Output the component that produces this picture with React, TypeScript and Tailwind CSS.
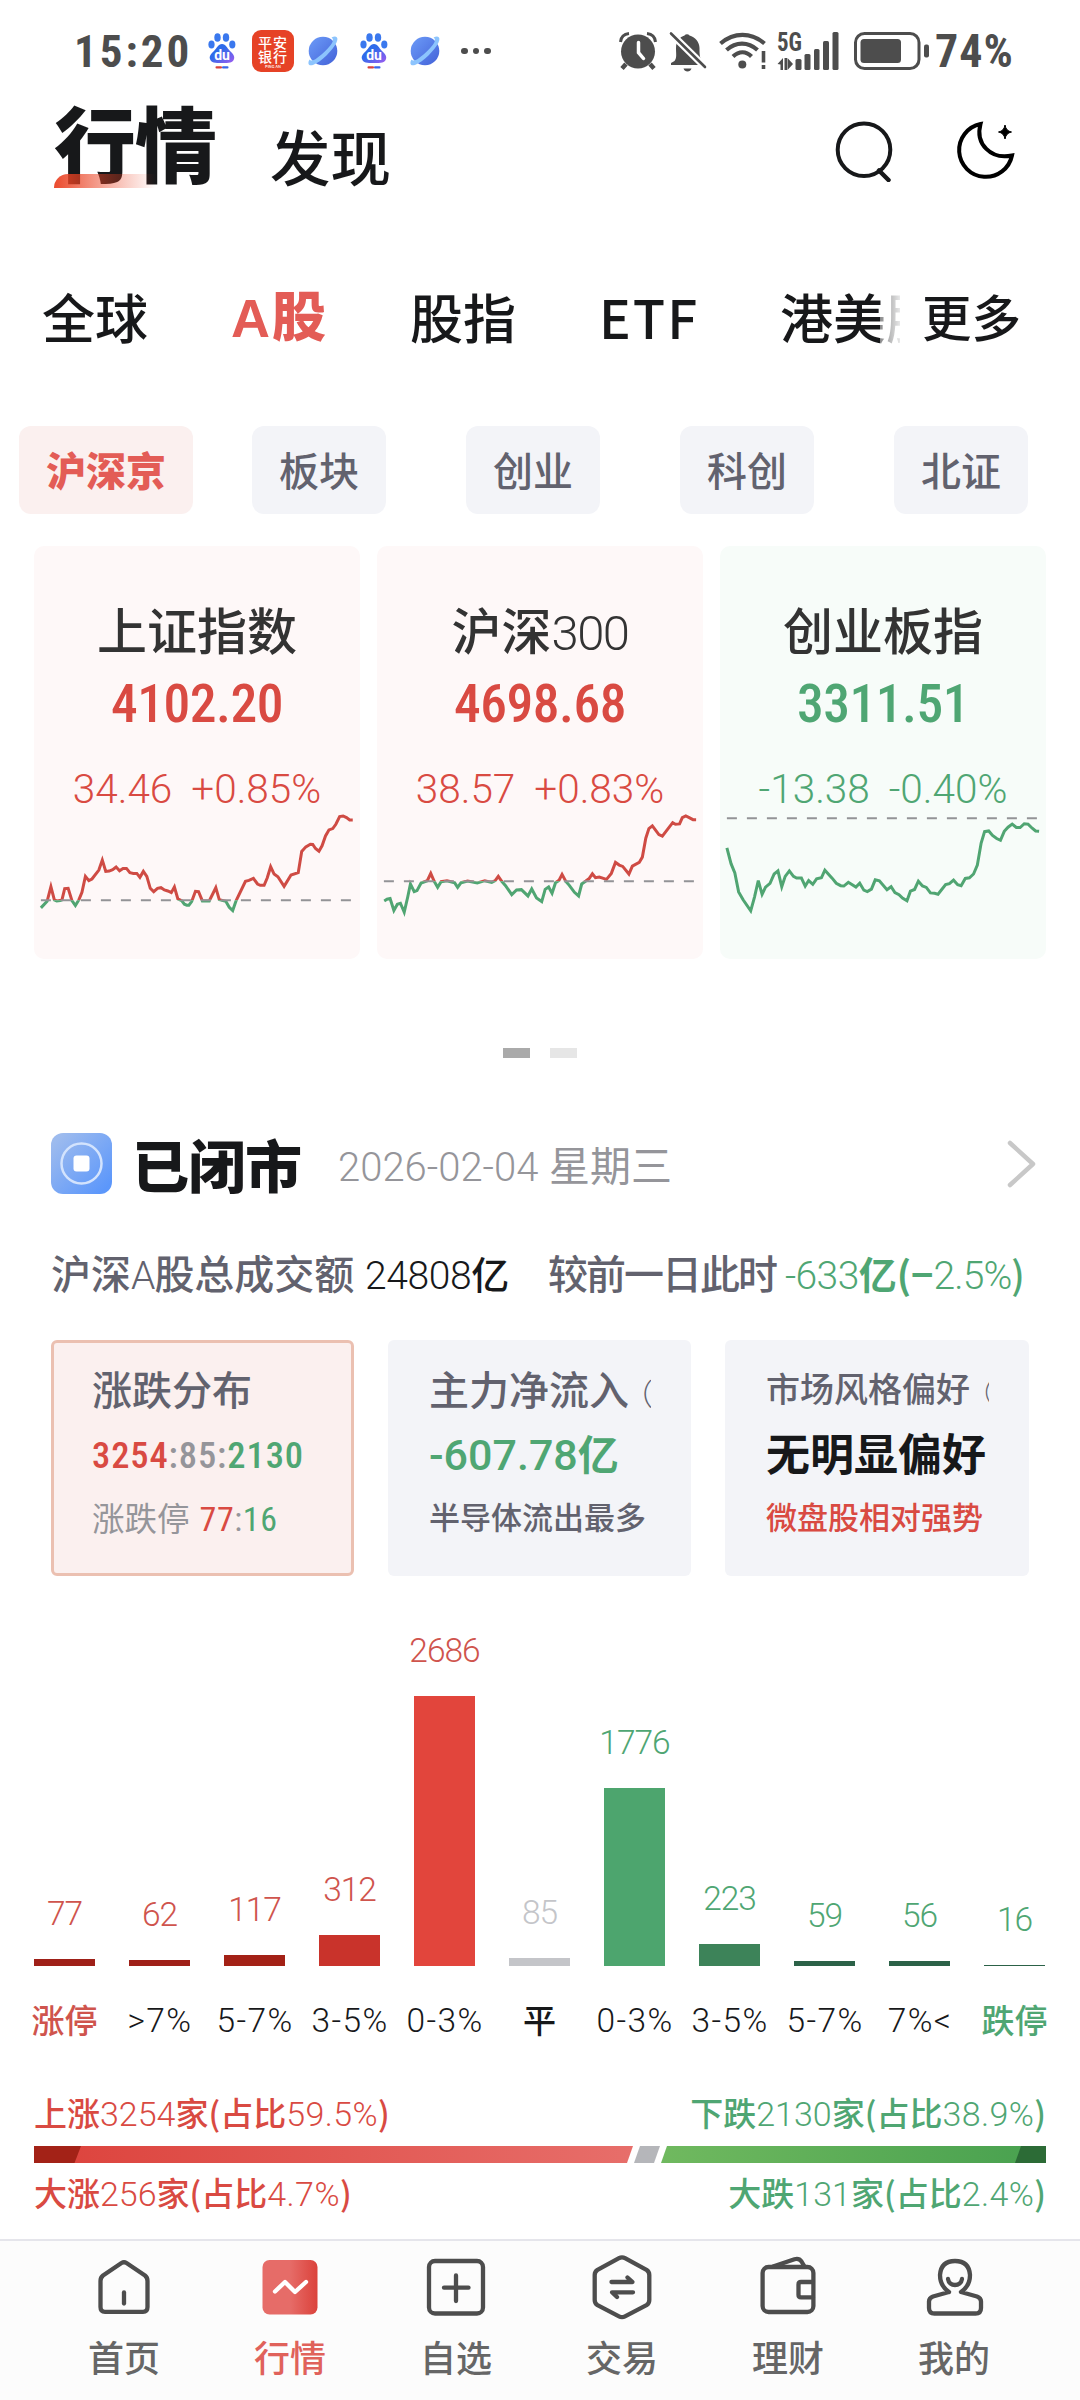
import { ReactNode, useId } from "react";
import { clsx } from "clsx";

const Num = ({ children, className }: { children: ReactNode; className?: string }) => (
  <span className={clsx("[font-family:'Roboto_Condensed',Roboto,sans-serif]", className)}>
    {children}
  </span>
);

const WideNum = ({ children, className }: { children: ReactNode; className?: string }) => (
  <span className={clsx("[font-family:Roboto,sans-serif]", className)}>{children}</span>
);

const BaiduIcon = () => (
  <svg width="28" height="36" viewBox="0 0 28 36">
    <defs>
      <linearGradient id="paw" x1="0" y1="0" x2="1" y2="1">
        <stop offset="0.4" stopColor="#2f6bea" />
        <stop offset="1" stopColor="#a05bf0" />
      </linearGradient>
    </defs>
    <ellipse cx="9.5" cy="4.5" rx="3.2" ry="4.3" fill="#3a78ee" />
    <ellipse cx="18" cy="4.5" rx="3.2" ry="4.3" fill="#3a78ee" />
    <ellipse cx="3.5" cy="11.5" rx="3.1" ry="4.1" fill="#3a78ee" />
    <ellipse cx="24.3" cy="11.5" rx="3.1" ry="4.1" fill="#3a78ee" />
    <path d="M14 11c4 0 5 4 8 7s5 5 4 8c-1 4-5 4-12 4S3 30 2 26c-1-3 1-5 4-8s4-7 8-7z" fill="url(#paw)" />
    <text x="14" y="26.5" textAnchor="middle" fontSize="14" fontWeight="700" fill="#fff" fontFamily="Roboto, sans-serif">
      du
    </text>
    <rect x="7.5" y="33.2" width="6.5" height="2.3" rx="1" fill="#d9413d" />
    <rect x="14" y="33.2" width="6.5" height="2.3" rx="1" fill="#3a66e8" />
  </svg>
);

const PlanetIcon = () => (
  <svg width="30" height="30" viewBox="0 0 30 30">
    <defs>
      <linearGradient id="planet" x1="0" y1="0" x2="1" y2="1">
        <stop offset="0" stopColor="#6d9cf8" />
        <stop offset="1" stopColor="#4261d8" />
      </linearGradient>
    </defs>
    <circle cx="15" cy="15" r="14.3" fill="url(#planet)" />
    <path
      d="M23.5 1.5C28 -1 31 1 28.5 6.5C25 14 13 26 5.5 28.7C1 30.5 -1 28 1.5 23.5C2.5 25 5 25 9 22C15 18 21.5 11 24 7C25.5 4.5 25 2.5 23.5 1.5Z"
      fill="#8cc4fd"
    />
  </svg>
);

const StatusBar = () => (
  <div className="flex h-[102px] items-center pl-[74px] pr-[62px] text-[#4d4d4d]">
    <Num className="w-[134px] text-[45px] font-bold leading-none tracking-[3px]">15:20</Num>
    <BaiduIcon />
    <div className="ml-4 flex h-[42px] w-[42px] flex-col items-center rounded-[9px] bg-[#e64226] pt-[5px] font-medium text-white [font-family:'Noto_Sans_CJK_SC',sans-serif]">
      <span className="text-[14px] leading-[14px] tracking-[1px]">平安</span>
      <span className="text-[14px] leading-[14px] tracking-[1px]">银行</span>
      <span className="text-[4px] leading-[6px]">PING AN</span>
    </div>
    <div className="ml-[14px] flex items-center gap-[22px]">
      <PlanetIcon />
      <BaiduIcon />
      <PlanetIcon />
    </div>
    <div className="ml-[21px] flex gap-[5px]">
      <span className="size-[6.5px] rounded-full bg-[#4d4d4d]" />
      <span className="size-[6.5px] rounded-full bg-[#4d4d4d]" />
      <span className="size-[6.5px] rounded-full bg-[#4d4d4d]" />
    </div>

    <div className="ml-auto flex items-center">
      <svg width="38" height="40" viewBox="0 0 38 40" fill="none" stroke="#4d4d4d">
        <circle cx="19" cy="20.5" r="17" fill="#4d4d4d" stroke="none" />
        <path d="M1.5 11C2 6 5 3 10 2.5M36.5 11C36 6 33 3 28 2.5" strokeWidth="3" />
        <path d="M7 33l-4 4.5M31 33l4 4.5" strokeWidth="4.5" />
        <path d="M19.5 11.5v10l5 6" stroke="#fff" strokeWidth="3.5" strokeLinecap="round" />
      </svg>
      <svg className="ml-3" width="38" height="42" viewBox="0 0 38 42" fill="#4d4d4d">
        <path d="M5.5 31C8 28 7 24 7 18C7 11 11 7 15.5 5.5a3 3 0 0 1 5 0C26 7 30.5 12 30.5 18c0 6 0 10 3 14v3H2v-2z" />
        <path d="M14.5 38.5h8c-1 4-7 4-8 0z" />
        <path d="M0 1.5L37 38" stroke="#fff" strokeWidth="7" />
        <path d="M2 3.5L36 37" stroke="#4d4d4d" strokeWidth="2.6" strokeLinecap="round" />
      </svg>
      <svg className="ml-3" width="48" height="40" viewBox="0 0 48 40" fill="none" stroke="#4d4d4d" strokeWidth="4.2">
        <path d="M1.5 12.5C15 1 32 1 45.5 12.5" />
        <path d="M7.5 19C17 10.5 29 10.5 38.5 19" />
        <path d="M14 25.5C20 20 27 20 32.5 25.5" />
        <circle cx="23.3" cy="33.5" r="4" fill="#4d4d4d" stroke="none" />
        <path d="M44.5 20v11.5M44.5 34v4" strokeWidth="3.6" />
      </svg>
      <svg className="ml-[10px] overflow-visible" width="62" height="38" viewBox="0 0 62 38" fill="#4d4d4d">
        <text x="0" y="19" fontSize="26" fontWeight="700" textLength="25" lengthAdjust="spacingAndGlyphs" fontFamily="Roboto Condensed, sans-serif">
          5G
        </text>
        <path d="M0.5 32L6 26V38H3.5V32.5zM7.5 26H10V38H7.5zM10.5 38V26L16 32z" />
        <rect x="18.5" y="27" width="6" height="11" rx="1.5" />
        <rect x="27.5" y="22" width="6" height="16" rx="1.5" />
        <rect x="37" y="17" width="5.5" height="21" rx="1.5" />
        <rect x="46" y="9" width="6" height="29" rx="1.5" />
        <rect x="55.5" y="0" width="6" height="38" rx="1.5" />
      </svg>
      <svg className="ml-[15px]" width="76" height="38" viewBox="0 0 76 38" fill="#4d4d4d">
        <rect x="1.5" y="1.5" width="63.5" height="35" rx="9" fill="none" stroke="#4d4d4d" strokeWidth="3" />
        <rect x="6.5" y="7" width="40.5" height="24" rx="3.5" />
        <rect x="70" y="12.5" width="5" height="13" rx="2" />
      </svg>
      <Num className="ml-[5px] w-[83px] text-[46px] font-bold leading-none tracking-[1px]">74%</Num>
    </div>
  </div>
);

const Header = () => (
  <header className="flex h-[152px] items-start pl-[54px] pr-[62px] text-[#17181a]">
    <div className="relative h-[86px] w-[162px]">
      <h1 className="mt-[-4px] text-[82px] font-black leading-[86px] tracking-[-1px]">行情</h1>
      <div className="absolute bottom-0 left-0 h-[14px] w-[102px] rounded-tl-[14px] bg-linear-to-r from-[#ea4122]/95 via-[#ea4122]/45 to-[#ea4122]/0" />
    </div>
    <span className="ml-[54px] pt-[23px] text-[60.5px] font-medium leading-[60px]">发现</span>
    <svg className="ml-auto mt-[16px]" width="60" height="64" viewBox="0 0 60 64" fill="none" stroke="#17181a" strokeWidth="4">
      <circle cx="30" cy="31.7" r="26.3" />
      <path d="M45 52.5L54.5 62" strokeWidth="4.5" strokeLinecap="round" />
    </svg>
    <svg className="ml-[60px] mt-[16px]" width="64" height="64" viewBox="0 0 64 64" fill="none" stroke="#000" strokeWidth="4">
      <path d="M26.5 6A26.7 26.7 0 1 0 58 37.5C37 42 21 26 26.5 6Z" />
      <path d="M51 7q1 6 6.5 7q-5.5 1 -6.5 7q-1 -6 -6.5 -7q5.5 -1 6.5 -7z" fill="#000" strokeWidth="1" />
    </svg>
  </header>
);

const Tabs = () => (
  <nav className="flex h-32 items-center pb-[4px] pl-[42px] text-[53px] font-medium leading-none text-[#17181a]">
    <span className="w-[189px]">全球</span>
    <span className="w-[179px] text-[54px] font-black text-[#e35c56]">
      <span className="tracking-[2px] [font-family:'Liberation_Sans',sans-serif]">A</span>股
    </span>
    <span className="w-[189px]">股指</span>
    <span className="w-[181px] tracking-[2px]">ETF</span>
    <div className="relative w-[120px] overflow-hidden whitespace-nowrap py-3">
      港美股
      <div className="absolute inset-y-0 right-0 w-[20px] bg-linear-to-r from-white/50 to-white/90" />
    </div>
    <span className="ml-[22px] text-[49.5px]">更多</span>
  </nav>
);

const chips = ["板块", "创业", "科创", "北证"];

const Chips = () => (
  <div className="mt-11 flex text-[40px] font-medium leading-none">
    <div className="ml-[19px] flex h-[88px] w-[174px] items-center justify-center rounded-[12px] bg-[#fbf0ef] pb-[3px] font-black text-[#e35c56]">
      沪深京
    </div>
    <div className="ml-[59px] flex gap-20">
      {chips.map((c) => (
        <div key={c} className="flex h-[88px] w-[134px] items-center justify-center rounded-[12px] bg-[#f3f4f8] pb-[3px] text-[#62626e]">
          {c}
        </div>
      ))}
    </div>
  </div>
);

type IndexData = {
  name: string;
  digits?: string;
  value: string;
  change: string;
  percent: string;
  up: boolean;
  viewBox: [number, number, number, number];
  base: number;
  points: string;
};

const indexes: IndexData[] = [
  {
    name: "上证指数",
    value: "4102.20",
    change: "34.46",
    percent: "+0.85%",
    up: true,
    viewBox: [42, 840, 945, 446],
    base: 1109,
    points:
      "62,1132 80,1112 91,1068 101,1108 108,1111 118,1110 123,1108 131,1074 141,1073 152,1110 162,1125 172,1108 181,1085 191,1037 201,1050 210,1045 230,1018 240,988 250,1022 260,1021 270,1017 280,1009 290,1020 300,1013 310,1013 320,1026 330,1028 340,1028 349,1040 359,1022 369,1037 379,1073 389,1083 400,1073 410,1071 420,1078 430,1081 440,1086 449,1069 459,1105 470,1110 478,1121 485,1124 491,1124 499,1113 510,1082 519,1083 530,1111 550,1111 560,1090 569,1071 579,1107 598,1112 608,1130 618,1140 628,1110 655,1052 665,1049 678,1043 690,1060 698,1064 709,1064 718,1042 728,1008 738,1030 749,1038 767,1067 787,1033 808,1026 818,962 830,948 843,940 850,941 858,953 868,961 877,945 887,915 897,897 908,893 917,880 928,857 938,855 948,860 957,867 966,867",
  },
  {
    name: "沪深",
    digits: "300",
    value: "4698.68",
    change: "38.57",
    percent: "+0.83%",
    up: true,
    viewBox: [1037, 840, 946, 446],
    base: 1052,
    points:
      "1058,1111 1066,1106 1075,1104 1086,1140 1096,1121 1105,1118 1116,1145 1126,1100 1134,1060 1145,1083 1153,1080 1165,1057 1183,1050 1193,1028 1203,1052 1213,1070 1223,1053 1240,1050 1262,1056 1271,1070 1281,1056 1300,1051 1328,1057 1350,1050 1370,1055 1380,1050 1389,1037 1399,1052 1410,1065 1428,1092 1442,1078 1456,1077 1475,1096 1486,1075 1500,1102 1515,1113 1525,1076 1535,1069 1545,1088 1555,1056 1565,1049 1574,1031 1585,1052 1595,1064 1610,1085 1622,1096 1631,1060 1643,1051 1653,1043 1662,1029 1671,1041 1682,1039 1703,1046 1717,1028 1729,995 1740,1003 1750,1007 1768,1030 1778,1006 1798,995 1807,979 1817,922 1826,893 1836,885 1855,911 1865,916 1895,875 1903,880 1915,879 1923,860 1933,855 1943,860 1954,866 1963,866",
  },
  {
    name: "创业板指",
    value: "3311.51",
    change: "-13.38",
    percent: "-0.40%",
    up: false,
    viewBox: [523, 815, 945, 430],
    base: 836,
    points:
      "543,922 555,968 566,995 577,1050 590,1073 612,1105 623,1065 634,1017 645,1057 655,1036 668,1025 680,998 691,989 702,1035 712,1005 724,989 736,1005 745,1010 759,1010 770,1033 780,1017 792,1028 803,1012 817,1009 827,987 848,1010 860,1025 873,1032 882,1033 895,1022 917,1036 928,1025 940,1045 950,1049 962,1042 973,1015 985,1018 1007,1044 1019,1035 1030,1052 1042,1058 1052,1068 1065,1076 1075,1048 1087,1043 1098,1019 1110,1033 1121,1037 1133,1053 1145,1054 1155,1057 1177,1029 1188,1026 1200,1016 1212,1029 1222,1032 1234,1011 1246,1009 1258,998 1269,972 1280,908 1290,875 1302,873 1313,886 1325,895 1336,900 1347,874 1358,862 1370,853 1382,863 1393,863 1405,852 1416,853 1428,865 1438,873 1448,874",
  },
];

// intraday line, red above yesterday's close and green below it
const Sparkline = ({ viewBox, base, points }: Pick<IndexData, "viewBox" | "base" | "points">) => {
  const id = useId();
  const [x, y, w, h] = viewBox;
  return (
    <svg className="h-[148px] w-full" viewBox={viewBox.join(" ")} preserveAspectRatio="none" fill="none">
      <defs>
        <clipPath id={`${id}up`}>
          <rect x={x} y={y} width={w} height={base - y} />
        </clipPath>
        <clipPath id={`${id}down`}>
          <rect x={x} y={base} width={w} height={y + h - base} />
        </clipPath>
      </defs>
      <polyline points={points} clipPath={`url(#${id}up)`} stroke="#cf4b44" strokeWidth="3" vectorEffect="non-scaling-stroke" />
      <polyline points={points} clipPath={`url(#${id}down)`} stroke="#50a572" strokeWidth="3" vectorEffect="non-scaling-stroke" />
      <line x1={x + 20} x2={x + w - 20} y1={base} y2={base} stroke="#939396" strokeWidth="2" strokeDasharray="10 10" vectorEffect="non-scaling-stroke" />
    </svg>
  );
};

const IndexCards = () => (
  <section className="mt-8 flex gap-[17px] pl-[34px]">
    {indexes.map((item) => (
      <div
        key={item.value}
        className={clsx(
          "flex h-[413px] w-[326px] flex-col items-center rounded-[10px]",
          item.up ? "bg-[#fef8f8] text-[#d94a42]" : "bg-[#f7fcf9] text-[#4fa673]",
        )}
      >
        <div className="mt-[52px] h-[60px] text-[50px] font-medium leading-[60px] text-[#333]">
          {item.name}
          {item.digits && <WideNum className="text-[49px] font-light tracking-[-1.5px]">{item.digits}</WideNum>}
        </div>
        <Num className="mt-[16px] text-[53.5px] font-medium leading-[60px] tracking-[-0.5px]">{item.value}</Num>
        <div className="mt-[33px] flex gap-[19px] text-[40.5px] font-light leading-[44px]">
          <WideNum>{item.change}</WideNum>
          <WideNum>{item.percent}</WideNum>
        </div>
        <div className="mt-auto w-full">
          <Sparkline viewBox={item.viewBox} base={item.base} points={item.points} />
        </div>
      </div>
    ))}
  </section>
);

const MarketStatus = () => (
  <section className="mt-[75px] pl-[51px]">
    <div className="flex h-[61px] items-center">
      <svg width="61" height="61" viewBox="0 0 61 61">
        <defs>
          <linearGradient id="market" x1="0" y1="0" x2="1" y2="1">
            <stop offset="0.1" stopColor="#9dbbee" />
            <stop offset="0.9" stopColor="#5c97fb" />
          </linearGradient>
        </defs>
        <rect width="61" height="61" rx="12" fill="url(#market)" />
        <circle cx="30.5" cy="30.5" r="20" fill="none" stroke="#d3e3fd" strokeWidth="2.5" />
        <rect x="22.5" y="22.5" width="16" height="16" rx="3" fill="#fff" />
      </svg>
      <h2 className="ml-[20px] w-[206px] pb-[2px] text-[57px] font-black leading-[60px] tracking-[-0.5px] text-[#17181a]">已闭市</h2>
      <div className="flex h-[62px] items-baseline text-[#95959a]">
        <WideNum className="w-[211px] text-[40px] font-light leading-[60px]">2026-02-04</WideNum>
        <span className="text-[41px] leading-[60px]">星期三</span>
      </div>
      <svg className="ml-auto mr-[43px]" width="30" height="50" viewBox="0 0 30 50" fill="none" stroke="#c8c8c8" strokeWidth="4.5" strokeLinecap="round" strokeLinejoin="round">
        <path d="M3 4L26 25L3 46" />
      </svg>
    </div>
    <div className="mt-[48px] flex h-[62px] items-baseline whitespace-nowrap text-[40px] font-medium leading-[60px] text-[#62626e]">
      <span className="w-[314px]">
        沪深<WideNum className="text-[39px] font-light tracking-[-1px]">A</WideNum>股总成交额
      </span>
      <span className="w-[183px] text-[#17181a]">
        <WideNum className="text-[39px] font-light tracking-[-0.4px]">24808</WideNum>
        <span className="text-[38px] font-medium">亿</span>
      </span>
      <span className="w-[237px] tracking-[-2px]">较前一日此时</span>
      <span className="text-[#4fa673]">
        <WideNum className="text-[39px] font-light tracking-[-0.6px]">-633</WideNum>
        <span className="text-[38px] font-bold">亿(−</span>
        <WideNum className="text-[39px] font-light tracking-[-0.9px]">2.5%</WideNum>
        <span className="text-[38px] font-medium">)</span>
      </span>
    </div>
  </section>
);

const SummaryCards = () => (
  <section className="mt-[36px] flex gap-[34px] pl-[51px] leading-[48px]">
    <div className="h-[236px] w-[303px] rounded-[6px] border-3 border-[#ebc0b1] bg-[#fbf0ef] pl-[38px] pt-[21px]">
      <div className="h-12 text-[40px] font-medium text-[#62626e]">涨跌分布</div>
      <Num className="mt-[20px] block h-12 whitespace-nowrap text-[36.5px] font-medium tracking-[0.9px] text-[#d94a42]">
        3254<span className="text-[#95959a]">:85:</span>
        <span className="text-[#4fa673]">2130</span>
      </Num>
      <div className="mt-[13px] h-12 text-[32.5px] text-[#95959a]">
        涨跌停
        <Num className="ml-2.5 text-[34px] font-normal tracking-[0.6px]">
          <span className="text-[#d94a42]">77</span>:<span className="text-[#4fa673]">16</span>
        </Num>
      </div>
    </div>
    <div className="h-[236px] w-[303px] rounded-[6px] bg-[#f3f4f8] pl-[41px] pr-10 pt-[24px] font-medium text-[#62626e]">
      <div className="h-12 overflow-hidden whitespace-nowrap text-[40px]">
        主力净流入<span className="ml-[-6px] text-[30px] font-light">（</span>
      </div>
      <div className="mt-[16px] h-12 text-[#4fa673]">
        <WideNum className="text-[43px] font-medium">-607.78</WideNum>
        <span className="text-[41px] font-bold">亿</span>
      </div>
      <div className="mt-[16px] h-12 whitespace-nowrap text-[31px]">半导体流出最多</div>
    </div>
    <div className="h-[236px] w-[304px] rounded-[6px] bg-[#f3f4f8] pl-[41px] pr-10 pt-[24px] font-medium text-[#62626e]">
      <div className="h-12 overflow-hidden whitespace-nowrap text-[34px]">
        市场风格偏好<span className="ml-[-2px] text-[25px] font-light">（</span>
      </div>
      <div className="mt-[16px] h-12 whitespace-nowrap text-[44px] font-bold text-[#17181a]">无明显偏好</div>
      <div className="mt-[16px] h-12 whitespace-nowrap text-[31px] text-[#d94a42]">微盘股相对强势</div>
    </div>
  </section>
);

const bars = [
  { label: "涨停", count: 77, height: 7, bar: "bg-[#9f2018]", text: "text-[#cf544d]" },
  { label: ">7%", count: 62, height: 6, bar: "bg-[#9f2018]", text: "text-[#cf544d]" },
  { label: "5-7%", count: 117, height: 11, bar: "bg-[#a32116]", text: "text-[#cf544d]" },
  { label: "3-5%", count: 312, height: 31, bar: "bg-[#c9332b]", text: "text-[#cf544d]" },
  { label: "0-3%", count: 2686, height: 270, bar: "bg-[#e2453c]", text: "text-[#cf544d]" },
  { label: "平", count: 85, height: 8, bar: "bg-[#c4c5c9]", text: "text-[#c4c5c9]" },
  { label: "0-3%", count: 1776, height: 178, bar: "bg-[#4da56e]", text: "text-[#4fa673]" },
  { label: "3-5%", count: 223, height: 22, bar: "bg-[#3d8359]", text: "text-[#4fa673]" },
  { label: "5-7%", count: 59, height: 5, bar: "bg-[#2c6248]", text: "text-[#4fa673]" },
  { label: "7%<", count: 56, height: 5, bar: "bg-[#2c6248]", text: "text-[#4fa673]" },
  { label: "跌停", count: 16, height: 1, bar: "bg-[#2c6248]", text: "text-[#4fa673]" },
];

const Distribution = () => (
  <section className="pl-[17px]">
    <div className="flex h-[390px] items-end">
      {bars.map((b, i) => (
        <div key={i} className="flex w-[95px] flex-col items-center">
          <WideNum className={clsx("mb-[25px] text-[33.5px] font-light leading-10 tracking-[-1px]", b.text)}>{b.count}</WideNum>
          <div className={clsx("w-[61px]", b.bar)} style={{ height: b.height }} />
        </div>
      ))}
    </div>
    <div className="mt-[35px] flex h-10 items-center leading-10">
      {bars.map((b, i) => (
        <div key={i} className="flex w-[95px] justify-center whitespace-nowrap text-[#17181a]">
          {/%/.test(b.label) ? (
            <WideNum className="pl-px text-[33.5px] font-light tracking-[1.4px]">{b.label}</WideNum>
          ) : (
            <span className={clsx("pb-1 text-[33px] font-medium", b.label.length > 1 && b.text)}>{b.label}</span>
          )}
        </div>
      ))}
    </div>
  </section>
);

const Stat = ({ title, count, percent }: { title: string; count: number; percent: string }) => (
  <span>
    {title}
    <WideNum className="text-[34px] font-light">{count}</WideNum>家(占比
    <WideNum className="text-[34px] font-light tracking-[0.4px]">{percent}</WideNum>)
  </span>
);

const Breadth = () => (
  <section className="mt-[46px] px-[34px] text-[33px] font-medium leading-[50px]">
    <div className="flex h-[50px] justify-between">
      <div className="text-[#d94a42]">
        <Stat title="上涨" count={3254} percent="59.5%" />
      </div>
      <div className="text-[#4fa673]">
        <Stat title="下跌" count={2130} percent="38.9%" />
      </div>
    </div>
    <svg className="mt-[9px] block" width="1012" height="17" viewBox="0 0 1012 17">
      <defs>
        <linearGradient id="rise">
          <stop offset="0" stopColor="#dd453f" />
          <stop offset="1" stopColor="#e76e6a" />
        </linearGradient>
        <linearGradient id="fall">
          <stop offset="0" stopColor="#70b95f" />
          <stop offset="1" stopColor="#4aa250" />
        </linearGradient>
      </defs>
      <path d="M40 0H599L593 17H40Z" fill="url(#rise)" />
      <path d="M0 0H47L40.5 17H0Z" fill="#a32217" />
      <path d="M606 0H626L620 17H600Z" fill="#b5b6ba" />
      <path d="M633 0H990V17H627Z" fill="url(#fall)" />
      <path d="M987 0H1012V17H981Z" fill="#2c6b36" />
    </svg>
    <div className="mt-[4px] flex h-[50px] justify-between">
      <div className="text-[#d94a42]">
        <Stat title="大涨" count={256} percent="4.7%" />
      </div>
      <div className="text-[#4fa673]">
        <Stat title="大跌" count={131} percent="2.4%" />
      </div>
    </div>
  </section>
);

const navItems = [
  {
    label: "首页",
    icon: (
      <>
        <path d="M27.5 9L9 21.5Q6.5 23.5 6.5 27V53Q6.5 57.8 11 57.8H49Q53.5 57.8 53.5 53V27Q53.5 23.5 51 21.5L32.5 9Q30 7.5 27.5 9Z" />
        <path d="M30 38.5V49.5" />
      </>
    ),
  },
  {
    label: "行情",
    active: true,
    icon: (
      <>
        <defs>
          <linearGradient id="active">
            <stop offset="0.5" stopColor="#e66c68" />
            <stop offset="1" stopColor="#db423b" />
          </linearGradient>
        </defs>
        <rect x="2.5" y="6" width="55" height="54.5" rx="7" fill="url(#active)" stroke="none" />
        <path d="M15 37.5L25 28L35 38L46 28" stroke="#fff" />
      </>
    ),
  },
  {
    label: "自选",
    icon: (
      <>
        <rect x="3" y="7" width="54" height="52.5" rx="6" />
        <path d="M18 33.7H42.5M30 21.5V47" />
      </>
    ),
  },
  {
    label: "交易",
    icon: (
      <>
        <path d="M27 4.2Q30 2.5 33 4.2L54.5 15.8Q57.3 17.5 57.3 21V46Q57.3 49.5 54.5 51.2L33 62.3Q30 64 27 62.3L5.5 51.2Q2.7 49.5 2.7 46V21Q2.7 17.5 5.5 15.8Z" />
        <path d="M19.5 28H40.5L35.5 23.5M41 38.3H20L25 43" />
      </>
    ),
  },
  {
    label: "理财",
    icon: (
      <>
        <rect x="4.6" y="13" width="50.8" height="45" rx="6" />
        <path d="M15 12.5L36.5 5.3Q41 4 43.5 7.5L46.5 12.5" />
        <path d="M55 28H43Q40.5 28 40.5 30.5V41Q40.5 43.3 43 43.3H55" />
      </>
    ),
  },
  {
    label: "我的",
    icon: (
      <>
        <path d="M25 38Q16 32 16 21Q17 7 31 7Q45 7 46 21Q46 32 37 38L53 42.5Q57 44 57 47.5V54Q57 59.5 51.5 59.5H10.5Q5 59.5 5 54V47.5Q5 44 9 42.5L25 38" />
        <path d="M24 25C25 33 37 33 38 25" />
      </>
    ),
  },
];

const BottomNav = () => (
  <footer className="mt-auto flex h-[161px] border-t-2 border-[#e5e5eb] bg-[#fcfcfc] px-[41px] pt-[13px]">
    {navItems.map((item) => (
      <div key={item.label} className="flex w-[166px] flex-col items-center">
        <svg
          width="60"
          height="66"
          viewBox="0 0 60 66"
          fill="none"
          stroke="#4d4d4d"
          strokeWidth="4.3"
          strokeLinecap="round"
          strokeLinejoin="round"
        >
          {item.icon}
        </svg>
        <span className={clsx("mt-[12px] text-[36px] font-medium leading-[48px]", item.active ? "text-[#e0625b]" : "text-[#666]")}>
          {item.label}
        </span>
      </div>
    ))}
  </footer>
);

export default function App() {
  return (
    <div className="flex h-[2400px] w-[1080px] flex-col overflow-hidden bg-white [font-family:'Noto_Sans_CJK_SC',sans-serif]">
      <StatusBar />
      <Header />
      <Tabs />
      <Chips />
      <IndexCards />
      <div className="mt-[89px] flex justify-center gap-5">
        <span className="h-[10px] w-[27px] bg-[#aaa]" />
        <span className="h-[10px] w-[27px] bg-[#e6e6e6]" />
      </div>
      <MarketStatus />
      <SummaryCards />
      <Distribution />
      <Breadth />
      <BottomNav />
    </div>
  );
}
